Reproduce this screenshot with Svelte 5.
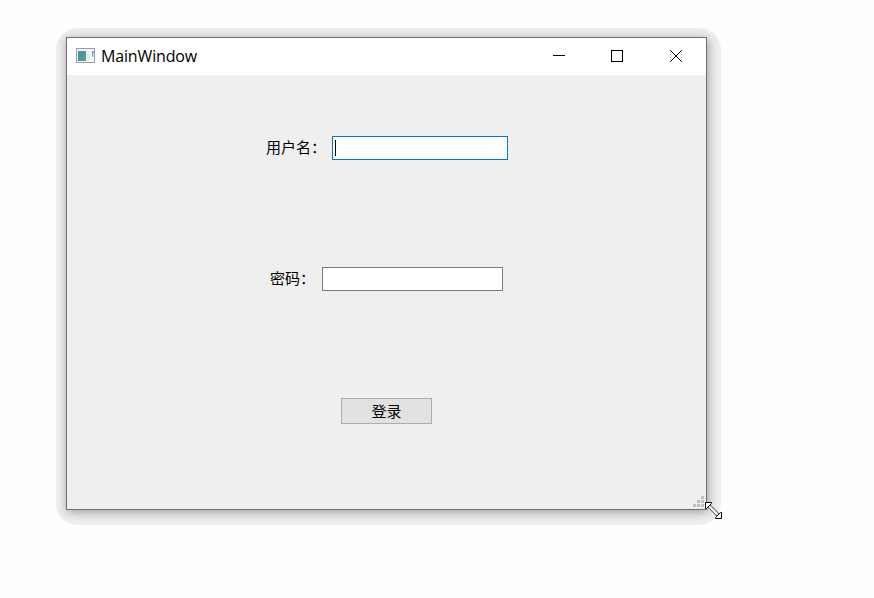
<script>
let username = $state("")
let password = $state("")

// Resize grip dots, bottom right corner of the window
const grip = [
    [8, 0],
    [4, 4], [8, 4],
    [0, 8], [4, 8], [8, 8]
]
</script>

<main class="desktop">
    <div class="halo">
        <div class="window">
            <header class="titlebar">
                <svg class="app-icon" width="20" height="16" viewBox="0 0 20 16">
                    <defs>
                        <linearGradient id="pane" x1="0" y1="0" x2="1" y2="1">
                            <stop offset="0" stop-color="#4d8caa" />
                            <stop offset="1" stop-color="#55a584" />
                        </linearGradient>
                        <linearGradient id="bar" x1="0" y1="0" x2="0" y2="1">
                            <stop offset="0" stop-color="#4a7fba" />
                            <stop offset="1" stop-color="#a5d6b5" />
                        </linearGradient>
                    </defs>
                    <rect x="0.5" y="0.5" width="18" height="14" fill="#f5f6f8" stroke="#9a9eaa" />
                    <rect x="2" y="3" width="8" height="10" fill="url(#pane)" />
                    <rect x="11" y="3" width="3" height="10" fill="#e9ebec" />
                    <rect x="16" y="3" width="1.5" height="6" fill="url(#bar)" />
                </svg>
                <span class="title">MainWindow</span>
                <div class="controls">
                    <svg width="12" height="12" viewBox="0 0 12 12" shape-rendering="crispEdges">
                        <path d="M0 5.5H12" />
                    </svg>
                    <svg width="12" height="12" viewBox="0 0 12 12" shape-rendering="crispEdges">
                        <rect x="0.5" y="0.5" width="11" height="11" />
                    </svg>
                    <svg class="close" width="12" height="12" viewBox="0 0 12 12">
                        <path d="M0.2 0.2L11.8 11.8M11.8 0.2L0.2 11.8" />
                    </svg>
                </div>
            </header>

            <div class="form">
                <label class="row user">
                    <span class="label">用户名：</span>
                    <span class="field focused">
                        <i class="caret"></i>
                        <input type="text" bind:value={username} />
                    </span>
                </label>
                <label class="row pass">
                    <span class="label">密码：</span>
                    <span class="field">
                        <input type="password" bind:value={password} />
                    </span>
                </label>
                <button class="login">登录</button>
            </div>

            <svg class="grip" width="11" height="11" viewBox="0 0 11 11">
                {#each grip as [x, y]}
                <rect {x} {y} width="3" height="3" />
                {/each}
            </svg>

            <svg class="pointer" width="18" height="18" viewBox="0 0 18 18">
                <path class="shaft" d="M4 4L14 14" />
                <path class="core" d="M4 4L14 14" />
                <path class="head" d="M0.5 0.5H6.5V1.5L1.5 6.5H0.5Z" />
                <path class="head" d="M16.5 16.5H10.5V15.5L15.5 10.5H16.5Z" />
            </svg>
        </div>
    </div>
</main>

<style>
:global(body) {
    background: #fefefe;
}
.desktop {
    box-sizing: border-box;
    height: 598px;
    padding: 28px 0 0 56px;
    overflow: hidden;
    font-family: "Open Sans", "Noto Sans CJK SC", sans-serif;
    color: #000;
}
.halo {
    box-sizing: border-box;
    width: 665px;
    height: 497px;
    padding: 9px 14px 15px 10px;
    border-radius: 22px;
    background: #efefef;
}
.window {
    position: relative;
    box-sizing: border-box;
    display: flex;
    flex-direction: column;
    height: 473px;
    border: 1px solid #6e6e6e;
    background: #efefef;
    box-shadow: 1px 2px 10px rgba(0, 0, 0, .36);
}
.titlebar {
    box-sizing: border-box;
    display: flex;
    align-items: center;
    height: 37px;
    padding: 0 24px 1px 9px;
    background: #fff;
}
.title {
    margin-left: 5px;
    font-size: 16px;
    line-height: 20px;
    letter-spacing: -0.15px;
}
.controls {
    display: flex;
    gap: 46px;
    margin-left: auto;
}
.controls svg {
    fill: none;
    stroke: #000;
    stroke-width: 1;
}
.controls .close {
    margin-left: 1px;
}
.form {
    display: flex;
    flex-direction: column;
    align-items: flex-start;
    padding-top: 61px;
    font-family: "Noto Sans CJK SC", sans-serif;
    font-size: 15px;
}
.row {
    display: flex;
    align-items: center;
    height: 24px;
    white-space: nowrap;
}
.label {
    height: 24px;
    line-height: 22px;
}
.user {
    margin-left: 199px;
    gap: 6px;
}
.pass {
    margin: 107px 0 0 203px;
    gap: 7px;
}
.field {
    box-sizing: border-box;
    display: flex;
    align-items: center;
    width: 181px;
    height: 24px;
    padding: 0 2px;
    border: 1px solid #7a7a7a;
    background: #fff;
}
.field.focused {
    width: 176px;
    border-color: #0078d7;
}
.caret {
    flex: none;
    width: 1px;
    height: 16px;
    background: #000;
}
input {
    flex: 1;
    min-width: 0;
    padding: 0;
    border: none;
    outline: none;
    background: none;
    font: inherit;
}
.login {
    box-sizing: border-box;
    width: 91px;
    height: 26px;
    margin: 107px 0 0 274px;
    padding: 0;
    border: 1px solid #adadad;
    background: #e1e1e1;
    color: #000;
    font: inherit;
    line-height: 24px;
}
.grip {
    position: absolute;
    right: 2px;
    bottom: 2px;
    fill: #bfbfbf;
}
.pointer {
    position: absolute;
    left: 638px;
    top: 464px;
}
.shaft {
    stroke: #666;
    stroke-width: 4;
}
.core {
    stroke: #fff;
    stroke-width: 2;
}
.head {
    fill: #fff;
    stroke: #000;
}
</style>
